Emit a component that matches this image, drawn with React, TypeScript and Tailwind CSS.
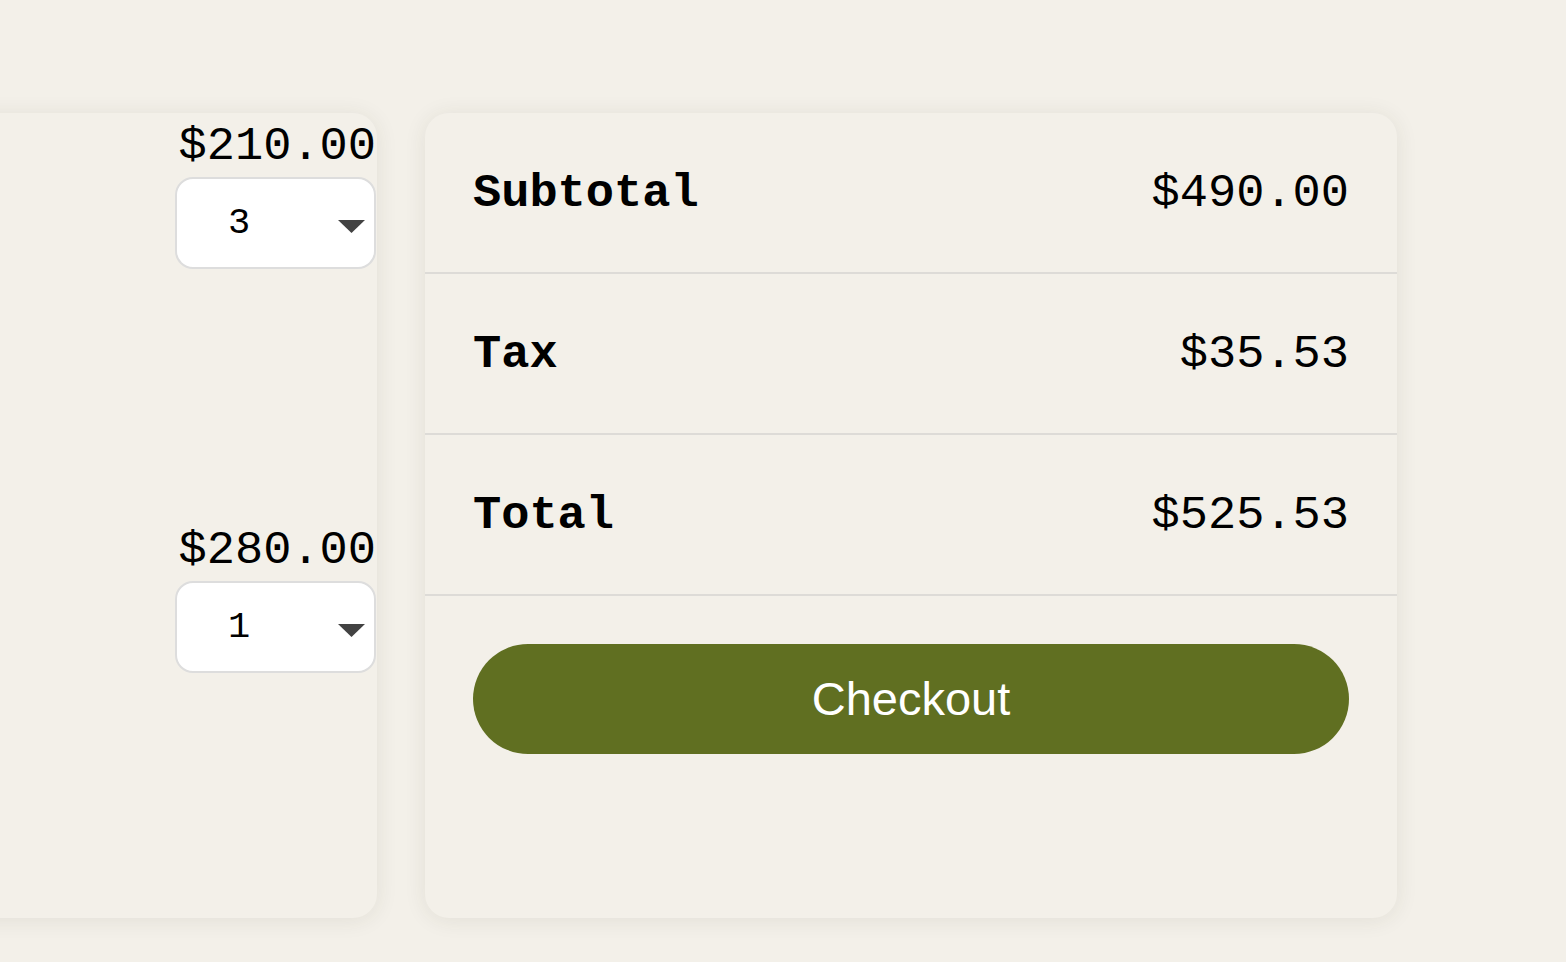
import React from "react";

const mono = { fontFamily: '"Liberation Mono", "Courier New", monospace' };

function Qty({ value }: { value: string }) {
  return (
    <div className="relative mt-[2px] flex h-[92px] w-[201px] items-center rounded-[18px] border-2 border-[#dddddd] bg-white">
      <span className="ml-[51px] text-[37px] leading-none text-black" style={mono}>
        {value}
      </span>
      <svg className="absolute right-[9px] top-[41px]" width="27" height="13" viewBox="0 0 27 13">
        <polygon points="0,0 27,0 13.5,13" fill="#424242" />
      </svg>
    </div>
  );
}

function Item({ price, qty }: { price: string; qty: string }) {
  return (
    <div className="flex h-[404px] flex-col items-end pt-[6px]">
      <div className="text-[47px] leading-[56px] text-black" style={mono}>
        {price}
      </div>
      <Qty value={qty} />
    </div>
  );
}

function Row({ label, value }: { label: string; value: string }) {
  return (
    <div className="flex h-[161px] items-center justify-between border-b-2 border-[#dddbd7] px-[48px] pt-[4px]">
      <span className="text-[47px] font-bold text-black" style={mono}>
        {label}
      </span>
      <span className="text-[47px] text-black" style={mono}>
        {value}
      </span>
    </div>
  );
}

export default function App() {
  return (
    <div className="min-h-[962px] w-full overflow-hidden bg-[#f3f0e9]">
      <div className="flex gap-[48px] pt-[113px]">
        <div className="ml-[-223px] h-[805px] w-[600px] shrink-0 overflow-hidden rounded-[24px] bg-[#f3f0e9] pr-[1px] shadow-[0_2px_22px_rgba(60,50,30,0.09)]">
          <Item price="$210.00" qty="3" />
          <Item price="$280.00" qty="1" />
        </div>
        <div className="h-[805px] w-[972px] shrink-0 rounded-[24px] bg-[#f3f0e9] shadow-[0_2px_22px_rgba(60,50,30,0.09)]">
          <Row label="Subtotal" value="$490.00" />
          <Row label="Tax" value="$35.53" />
          <Row label="Total" value="$525.53" />
          <div className="px-[48px] pt-[48px]">
            <button
              className="flex h-[110px] w-full items-center justify-center rounded-full bg-[#606f21] text-[47px] text-white"
              style={{ fontFamily: '"Liberation Sans", Arial, sans-serif' }}
            >
              Checkout
            </button>
          </div>
        </div>
      </div>
    </div>
  );
}
